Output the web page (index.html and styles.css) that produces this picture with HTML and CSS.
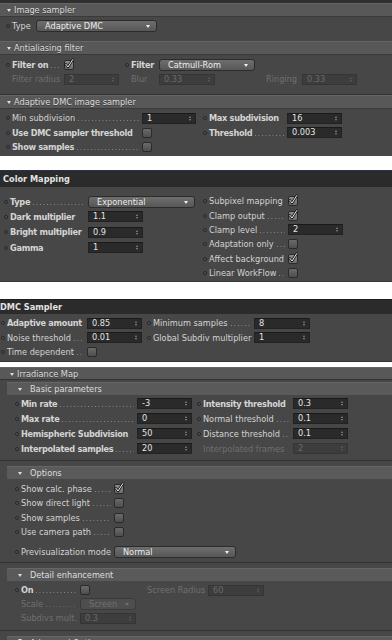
FILE: index.html
```html
<!DOCTYPE html>
<html lang="en">
<head>
    <meta charset="UTF-8">
    <meta name="viewport" content="width=device-width, initial-scale=1.0">
    <title>Render Settings</title>
    <link rel="stylesheet" href="styles.css">
</head>
<body>
    <!-- Image sampler panel -->
    <div class="panel image-panel">
        <div class="cut"></div>
        <div class="fold">Image sampler</div>
        <div class="body type-body">
            <div class="row">
                <i class="pin"></i><span class="lbl">Type</span><span class="drop type-drop">Adaptive DMC</span>
            </div>
        </div>

        <div class="fold">Antialiasing filter</div>
        <div class="body aa-body">
            <div class="aa-grid">
                <div class="row c1"><i class="pin"></i><span class="lbl b">Filter on<span class="lead"></span></span><span class="chk on"><svg viewBox="0 0 10 10"><path d="M1.8 5.2 L4 8 L8.8 0.6" class="ck-dark"/><path d="M1.8 5.2 L4 8 L8.8 0.6" class="ck-lite"/></svg></span></div>
                <div class="row c2 wide"><i class="pin"></i><span class="lbl b">Filter</span><span class="drop filter-drop">Catmull-Rom</span></div>
                <div class="row c1 off"><i class="pin hide"></i><span class="lbl">Filter radius</span><span class="fld">2</span></div>
                <div class="row c2 off"><i class="pin hide"></i><span class="lbl">Blur</span><span class="fld">0.33</span></div>
                <div class="row c3 off"><i class="pin hide"></i><span class="lbl">Ringing</span><span class="fld">0.33</span></div>
            </div>
        </div>

        <div class="fold">Adaptive DMC image sampler</div>
        <div class="body cols adaptive-body">
            <div class="col left">
                <div class="row"><i class="pin"></i><span class="lbl">Min subdivision<span class="lead"></span></span><span class="fld">1</span></div>
                <div class="row"><i class="pin"></i><span class="lbl b">Use DMC sampler threshold</span><span class="chk"></span></div>
                <div class="row"><i class="pin"></i><span class="lbl b">Show samples<span class="lead"></span></span><span class="chk"></span></div>
            </div>
            <div class="col right">
                <div class="row"><i class="pin"></i><span class="lbl b">Max subdivision</span><span class="fld">16</span></div>
                <div class="row"><i class="pin"></i><span class="lbl b">Threshold<span class="lead"></span></span><span class="fld">0.003</span></div>
            </div>
        </div>
    </div>

    <div class="gap gap-1"></div>

    <!-- Color Mapping panel -->
    <div class="panel cmap-panel">
        <div class="dhead">Color Mapping</div>
        <div class="body cols cmap-body">
            <div class="col left">
                <div class="row"><i class="pin"></i><span class="lbl b">Type<span class="lead"></span></span><span class="drop cmap-drop">Exponential</span></div>
                <div class="row"><i class="pin"></i><span class="lbl b">Dark multiplier</span><span class="fld">1.1</span></div>
                <div class="row"><i class="pin"></i><span class="lbl b">Bright multiplier</span><span class="fld">0.9</span></div>
                <div class="row"><i class="pin"></i><span class="lbl b">Gamma</span><span class="fld">1</span></div>
            </div>
            <div class="col right">
                <div class="row"><i class="pin"></i><span class="lbl">Subpixel mapping</span><span class="chk on"><svg viewBox="0 0 10 10"><path d="M1.8 5.2 L4 8 L8.8 0.6" class="ck-dark"/><path d="M1.8 5.2 L4 8 L8.8 0.6" class="ck-lite"/></svg></span></div>
                <div class="row"><i class="pin"></i><span class="lbl">Clamp output<span class="lead"></span></span><span class="chk on"><svg viewBox="0 0 10 10"><path d="M1.8 5.2 L4 8 L8.8 0.6" class="ck-dark"/><path d="M1.8 5.2 L4 8 L8.8 0.6" class="ck-lite"/></svg></span></div>
                <div class="row"><i class="pin"></i><span class="lbl">Clamp level<span class="lead"></span></span><span class="fld">2</span></div>
                <div class="row"><i class="pin"></i><span class="lbl">Adaptation only<span class="lead"></span></span><span class="chk"></span></div>
                <div class="row"><i class="pin"></i><span class="lbl">Affect background</span><span class="chk on"><svg viewBox="0 0 10 10"><path d="M1.8 5.2 L4 8 L8.8 0.6" class="ck-dark"/><path d="M1.8 5.2 L4 8 L8.8 0.6" class="ck-lite"/></svg></span></div>
                <div class="row"><i class="pin"></i><span class="lbl">Linear WorkFlow<span class="lead"></span></span><span class="chk"></span></div>
            </div>
        </div>
    </div>

    <div class="gap gap-2"></div>

    <!-- DMC Sampler panel -->
    <div class="panel dmc-panel">
        <div class="dhead">DMC Sampler</div>
        <div class="body cols dmc-body">
            <div class="col left">
                <div class="row"><i class="pin"></i><span class="lbl b">Adaptive amount</span><span class="fld">0.85</span></div>
                <div class="row"><i class="pin"></i><span class="lbl">Noise threshold<span class="lead"></span></span><span class="fld">0.01</span></div>
                <div class="row"><i class="pin"></i><span class="lbl">Time dependent<span class="lead"></span></span><span class="chk"></span></div>
            </div>
            <div class="col right">
                <div class="row"><i class="pin"></i><span class="lbl">Minimum samples<span class="lead"></span></span><span class="fld">8</span></div>
                <div class="row"><i class="pin"></i><span class="lbl">Global Subdiv multiplier</span><span class="fld">1</span></div>
            </div>
        </div>
    </div>

    <div class="gap gap-3"></div>

    <!-- Irradiance Map panel -->
    <div class="panel irr-panel">
        <div class="fold irr-fold">Irradiance Map</div>

        <div class="sub">Basic parameters</div>
        <div class="sub-body cols basic-body">
            <div class="col left">
                <div class="row"><i class="pin"></i><span class="lbl b">Min rate<span class="lead"></span></span><span class="fld">-3</span></div>
                <div class="row"><i class="pin"></i><span class="lbl b">Max rate<span class="lead"></span></span><span class="fld">0</span></div>
                <div class="row"><i class="pin"></i><span class="lbl b">Hemispheric Subdivision</span><span class="fld">50</span></div>
                <div class="row"><i class="pin"></i><span class="lbl b">Interpolated samples<span class="lead"></span></span><span class="fld">20</span></div>
            </div>
            <div class="col right">
                <div class="row"><i class="pin"></i><span class="lbl b">Intensity threshold</span><span class="fld">0.3</span></div>
                <div class="row"><i class="pin"></i><span class="lbl">Normal threshold<span class="lead"></span></span><span class="fld">0.1</span></div>
                <div class="row"><i class="pin"></i><span class="lbl">Distance threshold<span class="lead"></span></span><span class="fld">0.1</span></div>
                <div class="row off"><i class="pin hide"></i><span class="lbl">Interpolated frames</span><span class="fld">2</span></div>
            </div>
        </div>

        <div class="sub">Options</div>
        <div class="sub-body options-body">
            <div class="row"><i class="pin"></i><span class="lbl">Show calc. phase<span class="lead"></span></span><span class="chk on"><svg viewBox="0 0 10 10"><path d="M1.8 5.2 L4 8 L8.8 0.6" class="ck-dark"/><path d="M1.8 5.2 L4 8 L8.8 0.6" class="ck-lite"/></svg></span></div>
            <div class="row"><i class="pin"></i><span class="lbl">Show direct light<span class="lead"></span></span><span class="chk"></span></div>
            <div class="row"><i class="pin"></i><span class="lbl">Show samples<span class="lead"></span></span><span class="chk"></span></div>
            <div class="row"><i class="pin"></i><span class="lbl">Use camera path<span class="lead"></span></span><span class="chk"></span></div>
            <div class="row previs"><i class="pin"></i><span class="lbl">Previsualization mode</span><span class="drop previs-drop">Normal</span></div>
        </div>

        <div class="sub">Detail enhancement</div>
        <div class="sub-body detail-body">
            <div class="row">
                <div class="cell c1"><i class="pin"></i><span class="lbl b">On<span class="lead"></span></span><span class="chk"></span></div>
                <div class="cell c2 off"><i class="pin hide"></i><span class="lbl">Screen Radius</span><span class="fld">60</span></div>
            </div>
            <div class="row off"><i class="pin hide"></i><span class="lbl">Scale<span class="lead"></span></span><span class="drop scale-drop">Screen</span></div>
            <div class="row off"><i class="pin hide"></i><span class="lbl">Subdivs mult.</span><span class="fld">0.3</span></div>
        </div>

        <div class="sub last-sub">Advanced Options</div>
    </div>
</body>
</html>
```

FILE: styles.css
```css
/* General */
body {
    margin: 0;
    background: #fff;
    font-family: "DejaVu Sans", sans-serif;
    font-size: 8.2px;
    color: #d4d4d4;
    width: 392px;
    overflow: hidden;
}

.panel {
    background: #474747;
}

.gap { background: #fff; }
.gap-1 { height: 14px; }
.gap-2 { height: 17px; }
.gap-3 { height: 5px; }

/* Headers */
.cut {
    height: 3px;
    background: #2f2f2f;
}

.fold {
    box-sizing: border-box;
    height: 14px;
    display: flex;
    align-items: center;
    padding-left: 7px;
    background: #585858;
    border-top: 1px solid #656565;
    border-bottom: 1px solid #3a3a3a;
    color: #dcdcdc;
    text-shadow: 0 1px 0 rgba(0, 0, 0, 0.35);
}

.fold::before,
.sub::before {
    content: "";
    border-left: 2.5px solid transparent;
    border-right: 2.5px solid transparent;
    border-top: 3px solid #dedede;
    margin: 1px 3px 0 0;
}

.dhead {
    box-sizing: border-box;
    height: 16px;
    display: flex;
    align-items: center;
    padding-left: 3px;
    background: #2b2b2b;
    font-weight: bold;
    color: #e2e2e2;
}

.sub {
    box-sizing: border-box;
    height: 13px;
    margin-left: 7px;
    display: flex;
    align-items: center;
    padding-left: 11px;
    background: #5a5a5a;
    border-top: 1px solid #666;
    color: #dedede;
}

.sub::before {
    margin-right: 8px;
}

.last-sub {
    align-items: flex-start;
    padding-top: 1px;
}

/* Rows */
.cols {
    display: flex;
    align-items: flex-start;
}

.col {
    display: flex;
    flex-direction: column;
}

.row,
.cell {
    display: flex;
    align-items: center;
    height: 14px;
    white-space: nowrap;
}

.pin {
    flex: none;
    box-sizing: border-box;
    width: 4px;
    height: 4px;
    margin-right: 2px;
    border: 1px solid #262626;
    border-radius: 50%;
    background: #555;
}

.pin.hide { visibility: hidden; }

.lbl {
    flex: none;
    display: flex;
    align-items: center;
}

.lbl.b {
    font-weight: bold;
    letter-spacing: -0.3px;
}

.lead {
    flex: 1;
    height: 1px;
    margin: 5px 3px 0 3px;
    background: linear-gradient(to right, #8a8a8a 1px, transparent 1px) 0 0 / 3.5px 1px repeat-x;
}

.off { color: #6f6f6f; }
.off .lead { opacity: 0.5; }

/* Controls */
.fld {
    flex: none;
    position: relative;
    box-sizing: border-box;
    width: 55px;
    height: 11px;
    padding-left: 4px;
    line-height: 9px;
    background: #2a2a2a;
    border: 1px solid #222;
    border-top-color: #1a1a1a;
    color: #e4e4e4;
}

.fld::before,
.fld::after {
    content: "";
    position: absolute;
    right: 4px;
    border-left: 1.5px solid transparent;
    border-right: 1.5px solid transparent;
}

.fld::before {
    top: 2px;
    border-bottom: 2px solid #8a8a8a;
}

.fld::after {
    bottom: 2px;
    border-top: 2px solid #8a8a8a;
}

.off .fld {
    background: #3d3d3d;
    border-color: #353535;
    color: #6a6a6a;
}

.off .fld::before { border-bottom-color: #5e5e5e; }
.off .fld::after { border-top-color: #5e5e5e; }

.drop {
    flex: none;
    position: relative;
    box-sizing: border-box;
    height: 12px;
    padding-left: 8px;
    line-height: 10px;
    border: 1px solid #2c2c2c;
    border-radius: 3px;
    background: linear-gradient(#6e6e6e, #575757);
    color: #ececec;
}

.drop::after {
    content: "";
    position: absolute;
    right: 6px;
    top: 4px;
    border-left: 2.5px solid transparent;
    border-right: 2.5px solid transparent;
    border-top: 3px solid #eee;
}

.off .drop {
    background: #4e4e4e;
    border-color: #3a3a3a;
    color: #707070;
}

.off .drop::after { border-top-color: #707070; }

.chk {
    flex: none;
    box-sizing: border-box;
    width: 10px;
    height: 10px;
    border: 1px solid #2a2a2a;
    border-radius: 2px;
    background: linear-gradient(#6a6a6a, #4e4e4e);
}

.chk.on {
    background: linear-gradient(#8c8c8c, #6e6e6e);
}

.chk svg {
    display: block;
    width: 10px;
    height: 10px;
    margin: -2px 0 0 -1px;
    overflow: visible;
}

.ck-dark {
    fill: none;
    stroke: #151515;
    stroke-width: 2.4;
    stroke-linecap: round;
    stroke-linejoin: round;
}

.ck-lite {
    fill: none;
    stroke: #f4f4f4;
    stroke-width: 1;
    stroke-linecap: round;
    stroke-linejoin: round;
}

/* Image sampler */
.type-body {
    height: 24px;
    padding: 2px 0 0 6px;
    box-sizing: border-box;
}

.type-body .lbl { width: 24px; }
.type-drop { width: 121px; }

.aa-body {
    height: 40px;
    padding: 3px 0 0 6px;
    box-sizing: border-box;
    border-bottom: 1px solid #333;
}

.aa-grid {
    display: grid;
    grid-template-columns: 119px 135px auto;
}

.aa-grid .wide { grid-column: 2 / 4; }
.aa-grid .c1 .lbl { width: 52px; }
.aa-grid .c2 .lbl { width: 28px; }
.aa-grid .c3 .lbl { width: 36px; }
.filter-drop { width: 96px; }
.aa-grid .c2 .fld { width: 56px; }

.adaptive-body {
    height: 47px;
    padding: 2px 0 0 6px;
    box-sizing: border-box;
}

.adaptive-body .row { height: 14.5px; }
.adaptive-body .left { width: 197px; }
.adaptive-body .left .lbl { width: 130px; }
.adaptive-body .left .fld { width: 54px; }
.adaptive-body .right .lbl { width: 78px; }

/* Color mapping */
.cmap-panel {
    border-top: 1px solid #24314f;
}

.cmap-body {
    height: 95px;
    padding: 7px 0 0 4px;
    box-sizing: border-box;
    border-bottom: 1px solid #3a3a3a;
}

.cmap-body .left { width: 199px; }
.cmap-body .left .row { height: 15.3px; }
.cmap-body .right .row { height: 14.4px; }
.cmap-body .lbl { width: 78px; }
.cmap-body .right .lbl { width: 79px; }
.cmap-drop { width: 107px; }

/* DMC sampler */
.dmc-panel .dhead {
    height: 15px;
    padding-left: 0;
    border-top: 1px solid #1e1e1e;
}

.dmc-body {
    height: 48px;
    padding: 2px 0 0 1px;
    box-sizing: border-box;
    border-bottom: 1px solid #333;
}

.dmc-body .row { height: 14.5px; }
.dmc-body .left { width: 146px; }
.dmc-body .left .lbl { width: 80px; }
.dmc-body .right .lbl { width: 101px; }
.dmc-body .right .fld { width: 56px; }

/* Irradiance map */
.irr-panel {
    padding-bottom: 10px;
}

.irr-fold {
    height: 13px;
    padding-left: 10px;
    margin-bottom: 2px;
    border-bottom: 1px solid #333;
}

.sub-body {
    box-sizing: border-box;
    padding-left: 15px;
    border-bottom: 1px solid #333;
    margin-bottom: 5px;
}

.basic-body {
    height: 66px;
    padding-top: 1px;
}

.basic-body .row { height: 15px; }
.basic-body .left { width: 182px; }
.basic-body .left .lbl { width: 116px; }
.basic-body .right .lbl { width: 90px; }

.options-body {
    height: 84px;
    padding-top: 3px;
}

.options-body .row { height: 14.3px; }
.options-body .lbl { width: 93px; }
.options-body .previs { margin-top: 6px; }
.previs-drop { width: 122px; }

.detail-body {
    height: 50px;
    padding-top: 2px;
}

.detail-body .c1 { width: 126px; }
.detail-body .lbl { width: 59px; }
.detail-body .c2 .lbl { width: 61px; }
.scale-drop { width: 56px; }
.detail-body .fld { width: 56px; }
```
